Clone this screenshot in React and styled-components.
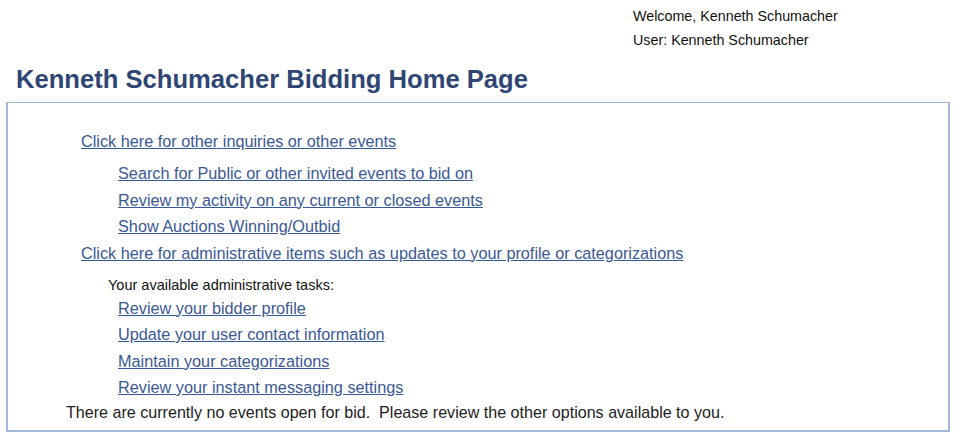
import React from 'react';
import styled, { createGlobalStyle } from 'styled-components';

const GlobalStyle = createGlobalStyle`
  body {
    margin: 0;
    background: #ffffff;
    font-family: "Liberation Sans", Arial, sans-serif;
  }
`;

const inquiryLinks = [
  'Search for Public or other invited events to bid on',
  'Review my activity on any current or closed events',
  'Show Auctions Winning/Outbid',
];

const adminLinks = [
  'Review your bidder profile',
  'Update your user contact information',
  'Maintain your categorizations',
  'Review your instant messaging settings',
];

const App = () => {
  return (
    <>
      <GlobalStyle />
      <Page>
        <UserInfo>
          <InfoLine>Welcome, Kenneth Schumacher</InfoLine>
          <InfoLine>User: Kenneth Schumacher</InfoLine>
        </UserInfo>
        <Title>Kenneth Schumacher Bidding Home Page</Title>
        <Box>
          <MainLink href="#">Click here for other inquiries or other events</MainLink>
          <SubList>
            {inquiryLinks.map((text) => (
              <SubLink key={text} href="#">
                {text}
              </SubLink>
            ))}
          </SubList>
          <MainLink href="#">Click here for administrative items such as updates to your profile or categorizations</MainLink>
          <AdminBlock>
            <TaskLabel>Your available administrative tasks:</TaskLabel>
            <SubList $tight>
              {adminLinks.map((text) => (
                <SubLink key={text} href="#">
                  {text}
                </SubLink>
              ))}
            </SubList>
          </AdminBlock>
          <Note>There are currently no events open for bid.&nbsp; Please review the other options available to you.</Note>
        </Box>
      </Page>
    </>
  );
};

export default App;

const Page = styled.div`
  width: 960px;
  height: 443px;
  overflow: hidden;
`;

const UserInfo = styled.div`
  display: flex;
  flex-direction: column;
  padding: 4px 0 0 633px;
`;

const InfoLine = styled.div`
  font-size: 14.3px;
  line-height: 24px;
  color: #111111;
`;

const Title = styled.h1`
  margin: 13px 0 0 16px;
  font-size: 25.6px;
  line-height: 28px;
  font-weight: bold;
  color: #2f4674;
`;

const Box = styled.div`
  display: flex;
  flex-direction: column;
  align-items: flex-start;
  width: 944px;
  height: 330px;
  margin: 9px 0 0 6px;
  padding: 25px 0 0 0;
  box-sizing: border-box;
  border: 1px solid #a2b8d8;
  border-width: 1px 2px 2px 2px;
`;

const MainLink = styled.a`
  margin-left: 73px;
  font-size: 16.25px;
  line-height: 26px;
  color: #3a5894;
  text-decoration: underline;
`;

const SubList = styled.div`
  display: flex;
  flex-direction: column;
  align-items: flex-start;
  margin: ${(props) => (props.$tight ? '0' : '6px 0 0 0')};
  padding-left: ${(props) => (props.$tight ? '10px' : '110px')};
`;

const SubLink = styled.a`
  font-size: 16.25px;
  line-height: 26.5px;
  color: #3a5894;
  text-decoration: underline;
`;

const AdminBlock = styled.div`
  display: flex;
  flex-direction: column;
  align-items: flex-start;
  margin-top: 10px;
  padding-left: 100px;
`;

const TaskLabel = styled.div`
  font-size: 14.5px;
  line-height: 19px;
  color: #111111;
`;

const Note = styled.div`
  margin-left: 58px;
  font-size: 16.1px;
  line-height: 22px;
  color: #222222;
`;
